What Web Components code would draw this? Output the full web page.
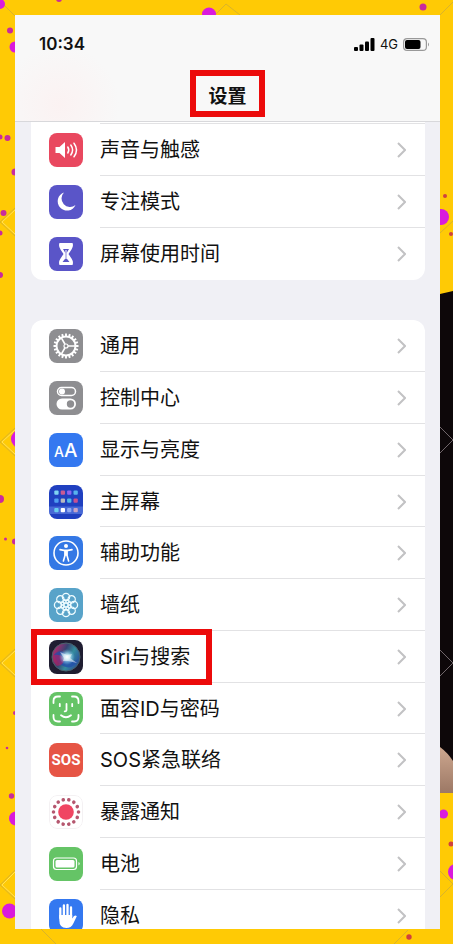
<!DOCTYPE html>
<html lang="zh-CN">
<head>
<meta charset="utf-8">
<meta name="viewport" content="width=device-width, initial-scale=1">
<title>设置</title>
<style>
body { margin: 0; color: #111; font-family: Inter, "Noto Sans CJK SC", sans-serif; }
</style>
</head>
<body>
<poster-frame>
  <settings-screen>
    <status-bar slot="header" network="4G">10:34</status-bar>
    <screen-title slot="header">设置</screen-title>
    <settings-group continued>
      <settings-row icon="sound">声音与触感</settings-row>
      <settings-row icon="moon">专注模式</settings-row>
      <settings-row icon="hourglass">屏幕使用时间</settings-row>
    </settings-group>
    <settings-group>
      <settings-row icon="gear">通用</settings-row>
      <settings-row icon="toggles">控制中心</settings-row>
      <settings-row icon="display">显示与亮度</settings-row>
      <settings-row icon="home">主屏幕</settings-row>
      <settings-row icon="access">辅助功能</settings-row>
      <settings-row icon="wallpaper">墙纸</settings-row>
      <settings-row icon="siri" marked>Siri与搜索</settings-row>
      <settings-row icon="face">面容ID与密码</settings-row>
      <settings-row icon="sos">SOS紧急联络</settings-row>
      <settings-row icon="exposure">暴露通知</settings-row>
      <settings-row icon="battery">电池</settings-row>
      <settings-row icon="hand">隐私</settings-row>
    </settings-group>
  </settings-screen>
</poster-frame>

<script>
function define(name, html, setup) {
  const template = document.createElement('template');
  template.innerHTML = html;
  customElements.define(name, class extends HTMLElement {
    constructor() {
      super();
      this.attachShadow({ mode: 'open' }).append(template.content.cloneNode(true));
    }
    connectedCallback() { if (setup) setup(this, this.shadowRoot); }
  });
}

const around = (n, draw) => Array.from({ length: n }, (_, i) => draw(i * 360 / n)).join('');

const icons = {
  sound: ['#e9485f', `<path d="M6.500 14h4l5.500-5v16l-5.500-5h-4z" fill="#fff"/><g fill="none" stroke="#fff" stroke-width="1.500" stroke-linecap="round"><path d="M18.800 14q2 3 0 6M21.800 12q3.600 5 0 10M25 10.200q5 6.800 0 13.600"/></g>`],
  moon: ['#5a55c8', `<path d="M15 7.500A9.300 9.300 0 1 0 26.500 20 8.500 8.500 0 0 1 15 7.500z" fill="#fff"/>`],
  hourglass: ['#5a55c8', `<path d="M10.500 6h13q1.300 3-1 6.500L19.500 17l3 4.500q2.300 3.500 1 6.500h-13q-1.300-3 1-6.500l3-4.500-3-4.500Q9.200 9 10.500 6z" fill="#fff"/><path d="M14 12h6l-2.300 4v5.500l2.800 3.500h-7l2.800-3.500V16z" fill="#5a55c8"/><path d="M17 13v9" stroke="#fff" stroke-width="1"/>`],
  gear: ['#8e8e91', `<g fill="none" stroke="#fff"><circle cx="17" cy="17" r="9.500" stroke-width="2"/><circle cx="17" cy="17" r="2" stroke-width="1.200"/>${around(20, a => `<path d="M17 4.500v3" stroke-width="1.900" transform="rotate(${a} 17 17)"/>`)}${[90, 210, 330].map(a => `<path d="M17 15V8" stroke-width="1.600" transform="rotate(${a} 17 17)"/>`).join('')}</g>`],
  toggles: ['#8e8e91', `<rect x="8.500" y="6.500" width="18" height="8" rx="4" fill="none" stroke="#fff" stroke-width="1.500"/><circle cx="13" cy="10.500" r="3" fill="#fff"/><rect x="7.500" y="17.500" width="19.500" height="11" rx="5.500" fill="#fff"/><circle cx="21.500" cy="23" r="3.700" fill="#8e8e91"/>`],
  display: ['#3478f0', `<text x="5" y="24" font-size="14" font-weight="500" fill="#fff">A</text><text x="15" y="24" font-size="19" font-weight="500" fill="#fff">A</text>`],
  home: ['#2040c0', `<rect y="21.500" width="34" height="7.500" fill="#5a7be0" opacity=".7"/>${['#7fd3f2','#c85a92','#8d63f0','#58b3ed','#4f9df0','#b8b9bf','#50b8e8','#c75090','#68cdef','#fff','#91aaf2','#c9a4c6'].map((c, i) => `<rect x="${5.300 + (i % 4) * 6.400}" y="${[5.500, 13.500, 23][Math.floor(i / 4)]}" width="4.300" height="4.300" rx="1" fill="${c}"/>`).join('')}`],
  access: ['#3478e5', `<circle cx="17" cy="17" r="12" fill="none" stroke="#fff" stroke-width="1.600"/><circle cx="17" cy="10" r="2" fill="#fff"/><path d="M11 13.600l4 .8h4l4-.8M15.900 14.800v5l-1.500 5.200M18.100 14.800v5l1.500 5.200M17 15v4" fill="none" stroke="#fff" stroke-width="1.600" stroke-linecap="round" stroke-linejoin="round"/>`],
  wallpaper: ['#58a3c9', `<g fill="none" stroke="#eefcff" stroke-width="1.300">${around(8, a => `<circle cx="17" cy="9" r="3.600" transform="rotate(${a} 17 17)"/>`)}${around(8, a => `<circle cx="17" cy="12.800" r="1.600" stroke-width=".9" transform="rotate(${a + 22} 17 17)"/>`)}<circle cx="17" cy="17" r="2"/></g>`],
  siri: ['#1f1d31', `<defs><linearGradient id="orb" x1="0" y1=".2" x2="1" y2=".7"><stop stop-color="#c92770"/><stop offset=".4" stop-color="#374372"/><stop offset=".65" stop-color="#348c9d"/><stop offset="1" stop-color="#284a9b"/></linearGradient><radialGradient id="glow"><stop stop-color="#fff"/><stop offset=".35" stop-color="#bde8f5" stop-opacity=".9"/><stop offset="1" stop-color="#6cb5e8" stop-opacity="0"/></radialGradient></defs><circle cx="17" cy="17" r="14" fill="url(#orb)" stroke="#49636d"/><path d="M5 15q7-8 13 1 6 8 11 3-5 12-15 7-6-3-9-11" fill="#234eac" opacity=".75"/><path d="M5 15q6-1 11 3-1 7-8 8-5-5-3-11" fill="#bd1d62" opacity=".6"/><circle cx="18" cy="17" r="8" fill="url(#glow)"/><path d="M11 12l7 3 5-1-2 4 7 5-9-2-5 0 1-3z" fill="#fff" opacity=".5"/>`],
  face: ['#65c466', `<g fill="none" stroke="#fff" stroke-width="1.800" stroke-linecap="round"><path d="M4.500 11V9q0-4.500 4.500-4.500h2M23 4.500h2q4.500 0 4.500 4.500v2M29.500 23v2q0 4.500-4.500 4.500h-2M11 29.500H9Q4.500 29.500 4.500 25v-2M10.800 12v2.200M23.200 12v2.200M17.500 12v6q0 1.500-1.800 1.300M12 23.300q5 4 10 0"/></g>`],
  sos: ['#e65545', `<text x="17" y="22" text-anchor="middle" font-size="15" font-weight="700" fill="#fff" font-family="Roboto, sans-serif">SOS</text>`],
  exposure: ['#fff', `<circle cx="17" cy="17" r="7.800" fill="#f04562"/>${around(14, a => `<circle cx="17" cy="4.500" r="1.800" fill="#b5576f" transform="rotate(${a + 13} 17 17)"/>`)}<rect x=".5" y=".5" width="33" height="33" rx="7.500" fill="none" stroke="#f4f1f3"/>`],
  battery: ['#65c466', `<rect x="4.500" y="11" width="23" height="11.500" rx="3" fill="none" stroke="#fff" stroke-width="1.200"/><rect x="6.500" y="13" width="19" height="7.500" rx="1.500" fill="#fff"/><path d="M29.500 15q2.500 1.700 0 3.500z" fill="#fff"/>`],
  hand: ['#3478f0', `<g fill="none" stroke="#fff" stroke-width="2.300" stroke-linecap="round"><path d="M11.300 19V9.500M14.900 17V6.500M18.500 17V6M22 18V8.500"/></g><path d="M10.200 16h13v3.500l1.600-2.200q1.800-1.700 3 0l-3.500 7.200q-2 4.500-7 4.500-7 0-7-8z" fill="#fff"/>`]
};

define('settings-row', `<style>
  :host { display: block; height: 52px; position: relative; }
  :host(:nth-child(4n)) { height: 51px; }
  a { display: flex; height: 100%; padding-left: 18px; gap: 17px; align-items: center; color: inherit; text-decoration: none; }
  .body { flex: 1; align-self: stretch; display: flex; align-items: center; justify-content: space-between; padding: 1px 19px 0 0; border-bottom: 1px solid #e2e2e4; font-size: 20px; line-height: 28px; }
  :host(:last-child) .body { border-bottom-color: transparent; }
  .chevron { width: 9px; height: 16px; fill: none; stroke: #c2c2c4; stroke-width: 2; }
  :host([marked])::after { content: ""; position: absolute; z-index: 1; left: 0; top: -2px; bottom: -2px; width: 181px; box-sizing: border-box; border: 6px solid #ec0b0b; pointer-events: none; }
</style><a href="#"><app-icon></app-icon><span class="body"><span><slot></slot></span><svg class="chevron" viewBox="0 0 9 16" aria-hidden="true"><path d="M1 1l7 7-7 7"/></svg></span></a>`,
(el, root) => root.querySelector('app-icon').setAttribute('name', el.getAttribute('icon')));

// Defined after settings-row, which gives each icon its name.
define('app-icon', `<style>
  :host { display: block; flex: none; width: 34px; height: 34px; border-radius: 8px; overflow: hidden; }
  svg { display: block; width: 100%; height: 100%; }
</style><svg viewBox="0 0 34 34" aria-hidden="true"></svg>`, (el, root) => {
  const [colour, art] = icons[el.getAttribute('name')];
  el.style.background = colour;
  root.querySelector('svg').innerHTML = art;
});

define('settings-group', `<style>
  :host { display: block; flex: none; margin: 0 15px 0 16px; background: #fff; border-radius: 12px; }
  :host([continued]) { border-radius: 0 0 12px 12px; padding-top: 1px; }
  .rule { display: none; height: 1px; margin-left: 69px; background: #e2e2e4; }
  :host([continued]) .rule { display: block; }
</style><div class="rule"></div><slot></slot>`);

define('status-bar', `<style>
  :host { display: flex; align-items: center; justify-content: space-between; padding: 18px 10px 0 24px; font-size: 17px; font-weight: 600; line-height: 22px; }
  .state { display: flex; align-items: center; gap: 5px; font-size: 13px; font-weight: 400; }
</style><span><slot></slot></span><span class="state">
<svg width="21" height="13" viewBox="0 0 21 13" aria-label="信号"><g fill="#000"><rect y="9" width="4" height="4" rx="1"/><rect x="5.500" y="6.500" width="4" height="6.500" rx="1"/><rect x="11" y="3.500" width="4" height="9.500" rx="1"/><rect x="16.500" width="4" height="13" rx="1"/></g></svg>
<span class="network"></span>
<svg width="27" height="13" viewBox="0 0 27 13" aria-label="电量"><rect x=".6" y=".6" width="22.800" height="11.800" rx="3.500" fill="none" stroke="#999" stroke-width="1.200"/><rect x="2" y="2" width="15.500" height="9" rx="2" fill="#000"/><path d="M25 4.500q2 2 0 4z" fill="#999"/></svg></span>`,
(el, root) => { root.querySelector('.network').textContent = el.getAttribute('network'); });

define('screen-title', `<style>
  :host { display: flex; justify-content: center; padding-top: 15px; }
  h1 { margin: 0; padding: 7px 12px 0; border: 6px solid #ec0b0b; font-size: 19px; font-weight: 700; line-height: 28px; }
</style><h1><slot></slot></h1>`);

define('settings-screen', `<style>
  :host { display: flex; flex-direction: column; min-width: 0; min-height: 0; overflow: hidden; background: #f0f0f5; }
  header { flex: none; padding-bottom: 4px; border-bottom: 1px solid #d8d8db; background: radial-gradient(circle at 45px 90px, #fbf2f2, transparent 60px) #f8f8f8; }
  main { flex: 1; min-height: 0; display: flex; flex-direction: column; gap: 40px; overflow: hidden; }
</style><header><slot name="header"></slot></header><main><slot></slot></main>`);

define('poster-frame', `<style>
  :host { display: grid; grid-template: 15px minmax(0, 1fr) 15px / 15px minmax(0, 1fr) 13px; height: 100vh; background: #ffca05; }
  svg { display: block; width: 100%; height: 100%; overflow: hidden; }
  .left { grid-area: 1 / 1 / 4 / 2; }
  .right { grid-area: 1 / 3 / 4 / 4; }
  .top { grid-area: 1 / 2; }
  .bottom { grid-area: 3 / 2; }
  ::slotted(*) { grid-area: 2 / 2; }
  .line { fill: none; stroke: #d9b32b; stroke-width: 1; }
  .pale { stroke: #ffdf59; }
</style>
<svg class="left" viewBox="0 0 15 944" preserveAspectRatio="xMinYMin slice" aria-hidden="true"><g class="line"><path d="M4 5l11 11M15 208L0 222l15 14M15 428L0 442l15 14M15 649L0 663l15 14M15 870L0 885l15 14"/><path class="pale" d="M15 210L2 222l13 12M15 430L2 442l13 12M15 651L2 663l13 12M15 872L2 885l13 12"/></g><g fill="#c92b9d"><circle cx="10" cy="30.500" r="3"/><circle cx="0" cy="137" r="2.500"/><circle cx="7.500" cy="138" r="3"/><circle cx="15" cy="172" r="3.500"/><circle cx="3.500" cy="213" r="3"/><circle cx="0" cy="233" r="2.500"/><circle cx="0" cy="275" r="3"/><circle cx="0" cy="499" r="4"/><circle cx="5.500" cy="539" r="1.500"/><circle cx="15" cy="541.500" r="3"/><circle cx="15" cy="713" r="2"/><circle cx="7" cy="748" r="1.300"/><circle cx="11.500" cy="796" r="2.700"/></g><g fill="#d91bdc"><circle cx="0" cy="4" r="5"/><circle cx="15" cy="47" r="5.500"/><circle cx="20" cy="439" r="9"/><circle cx="16" cy="818.500" r="7"/><circle cx="9.500" cy="911" r="7.500"/></g></svg>
<svg class="top" viewBox="0 0 425 15" preserveAspectRatio="xMidYMid slice" aria-hidden="true"><path class="line" d="M200 15l11-11 14 11"/><ellipse cx="194" cy="14" rx="7" ry="6.500" fill="#d91bdc"/><g fill="#c92b9d"><circle cx="44" cy="-1" r="3"/><circle cx="408" cy="7" r="3.500"/></g></svg>
<svg class="right" viewBox="0 0 13 944" preserveAspectRatio="xMinYMin slice" aria-hidden="true"><defs><linearGradient id="skin" y1="0" y2="1" x2="0"><stop stop-color="#cda78f"/><stop offset="1" stop-color="#9c7865"/></linearGradient></defs><path d="M0 294l13-3v502H0z" fill="#0d0709"/><path d="M0 747q8 6 13 14v32H0z" fill="url(#skin)"/><g class="line"><path d="M0 15L13 2M0 233l13-12M0 871l13 13-13 13"/><path d="M0 427l13 13-13 13M0 650l13 13-13 13" stroke="#70666a"/></g><g fill="#d91bdc"><circle cx="1" cy="217" r="8"/><circle cx="3.500" cy="814" r="4.500"/><circle cx="16" cy="872" r="8"/></g><g fill="#cf413f"><circle cx="5" cy="196" r="2"/><circle cx="11" cy="234" r="2"/><circle cx="11" cy="844" r="2.500"/></g></svg>
<svg class="bottom" viewBox="0 0 425 15" preserveAspectRatio="xMaxYMid slice" aria-hidden="true"><path class="line" d="M26 0l15 15M379 15l14-14"/><circle cx="394" cy="8" r="2.700" fill="#cf413f"/></svg>
<slot></slot>`);
</script>
</body>
</html>
